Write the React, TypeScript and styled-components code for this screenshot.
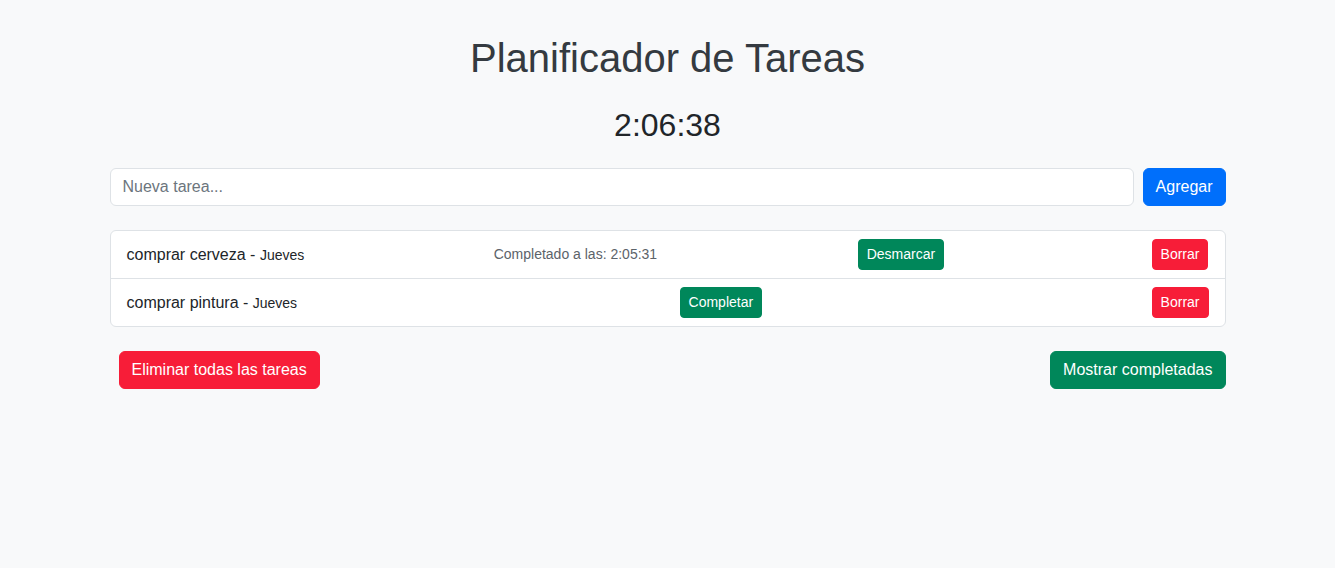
import React from 'react';
import styled, { createGlobalStyle, css } from 'styled-components';

const GlobalStyle = createGlobalStyle`
  * {
    box-sizing: border-box;
  }
  body {
    margin: 0;
    background-color: #f8f9fa;
    font-family: 'Liberation Sans', Arial, sans-serif;
    font-size: 16px;
    line-height: 1.5;
    color: #212529;
  }
`;

type Variant = 'primary' | 'success' | 'danger';

const colors: Record<Variant, string> = {
  primary: '#006ffb',
  success: '#00875a',
  danger: '#f71d38',
};

const Container = styled.div`
  width: 1140px;
  margin: 0 auto;
  padding: 34px 12px 0;
`;

const Title = styled.h1`
  margin: 0 0 24px;
  font-size: 40px;
  font-weight: 400;
  line-height: 1.2;
  text-align: center;
  color: #343a40;
`;

const Clock = styled.h2`
  margin: 0 0 24px;
  font-size: 32px;
  font-weight: 400;
  line-height: 1.2;
  text-align: center;
  color: #212529;
`;

const InputRow = styled.form`
  display: flex;
  gap: 9px;
  margin-bottom: 24px;
`;

const TextInput = styled.input`
  flex: 1;
  height: 38px;
  padding: 6px 12px;
  font-family: inherit;
  font-size: 16px;
  color: #212529;
  background: #fff;
  border: 1px solid #dee2e6;
  border-radius: 6px;
  outline: none;

  &::placeholder {
    color: #6c757d;
  }
`;

const Button = styled.button<{ $variant: Variant; $small?: boolean; $offset?: number }>`
  margin-left: ${(p) => p.$offset ?? 0}px;
  border: 1px solid ${(p) => colors[p.$variant]};
  background-color: ${(p) => colors[p.$variant]};
  color: #fff;
  font-family: inherit;
  line-height: 1.5;
  cursor: pointer;
  white-space: nowrap;
  ${(p) =>
    p.$small
      ? css`
          padding: 4px 8px;
          font-size: 14px;
          border-radius: 4px;
        `
      : css`
          padding: 6px 12px;
          font-size: 16px;
          border-radius: 6px;
        `}
`;

const TaskList = styled.ul`
  list-style: none;
  margin: 0 0 24px;
  padding: 0;
  background: #fff;
  border: 1px solid #dee2e6;
  border-radius: 6px;
`;

const TaskItem = styled.li`
  display: flex;
  align-items: center;
  justify-content: space-between;
  padding: 8px 16px;

  & + & {
    border-top: 1px solid #dee2e6;
  }
`;

const TaskName = styled.span`
  font-size: 16px;
  color: #212529;
`;

const Day = styled.small`
  font-size: 14px;
`;

const Done = styled.span`
  font-size: 14px;
  color: #5c636a;
`;

const Footer = styled.div`
  display: flex;
  justify-content: space-between;
  padding-left: 9px;
`;

type Task = { name: string; day: string; completedAt?: string };

const tasks: Task[] = [
  { name: 'comprar cerveza', day: 'Jueves', completedAt: '2:05:31' },
  { name: 'comprar pintura', day: 'Jueves' },
];

const App: React.FC = () => {
  return (
    <>
      <GlobalStyle />
      <Container>
        <Title>Planificador de Tareas</Title>
        <Clock>2:06:38</Clock>
        <InputRow onSubmit={(e) => e.preventDefault()}>
          <TextInput placeholder="Nueva tarea..." />
          <Button $variant="primary" type="submit">
            Agregar
          </Button>
        </InputRow>
        <TaskList>
          {tasks.map((t) => (
            <TaskItem key={t.name}>
              <TaskName>
                {t.name} - <Day>{t.day}</Day>
              </TaskName>
              {t.completedAt && <Done>Completado a las: {t.completedAt}</Done>}
              <Button $variant="success" $small $offset={11}>
                {t.completedAt ? 'Desmarcar' : 'Completar'}
              </Button>
              <Button $variant="danger" $small $offset={18}>
                Borrar
              </Button>
            </TaskItem>
          ))}
        </TaskList>
        <Footer>
          <Button $variant="danger">Eliminar todas las tareas</Button>
          <Button $variant="success">Mostrar completadas</Button>
        </Footer>
      </Container>
    </>
  );
};

export default App;
